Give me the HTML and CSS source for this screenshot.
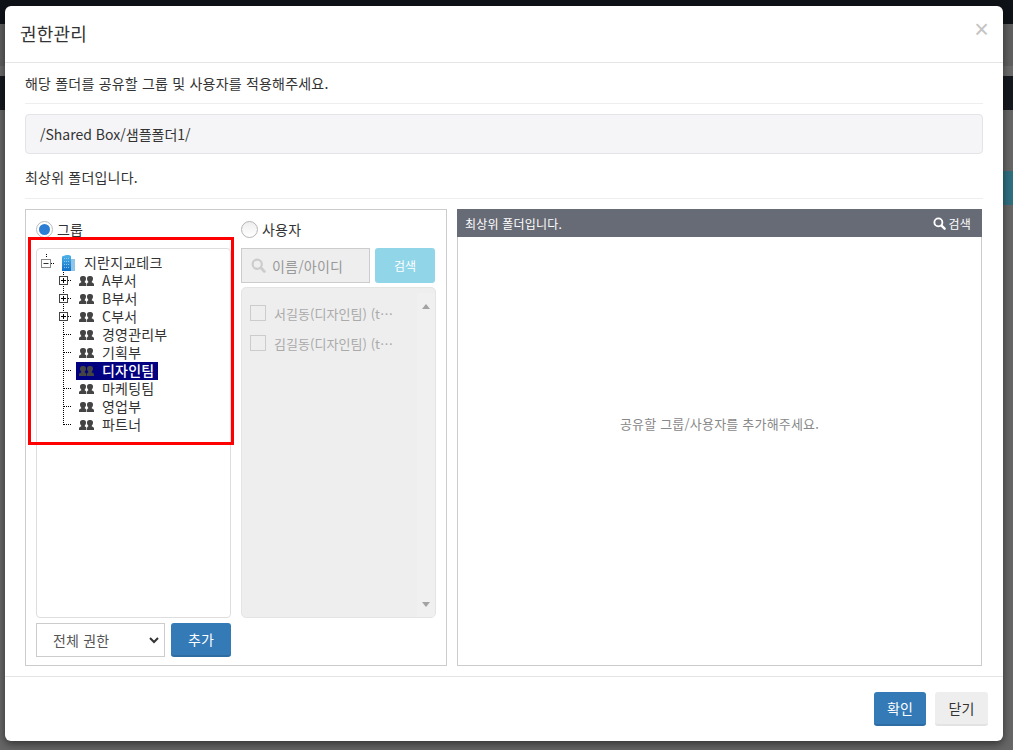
FILE: index.html
```html
<!DOCTYPE html>
<html lang="ko">
<head>
<meta charset="utf-8">
<title>권한관리</title>
<link rel="stylesheet" href="styles.css">
</head>
<body>
<svg class="defs" width="0" height="0" aria-hidden="true">
  <defs>
    <linearGradient id="bld" x1="0" y1="0" x2="0" y2="1">
      <stop offset="0" stop-color="#4fb4ea"/>
      <stop offset="1" stop-color="#0f6fc6"/>
    </linearGradient>
    <symbol id="i-group" viewBox="0 0 15 12">
      <path fill="currentColor" d="M3.500 1h1A2.500 2.500 0 0 1 7 3.500c0 1.300-.5 2.400-1.200 3v1.100C7 8 7.400 8.600 7.400 9.500V11H0V9.500c0-.9.900-1.500 2.200-1.900V6.500C1.500 5.900 1 4.800 1 3.500A2.500 2.500 0 0 1 3.500 1z"/>
      <path fill="currentColor" d="M10.500 1h1A2.500 2.500 0 0 1 14 3.500c0 1.300-.5 2.400-1.200 3v1.100c1.300.4 2.200 1 2.200 1.900V11H8V9.500c0-.9.200-1.500 1.200-1.900V6.500C8.500 5.900 8 4.800 8 3.500A2.500 2.500 0 0 1 10.500 1z"/>
    </symbol>
    <symbol id="i-plus" viewBox="0 0 18 18">
      <path fill="none" stroke="#000" stroke-dasharray="1 1" d="M9.500 0v18M14 8.500h4"/>
      <rect x="5.500" y="4.500" width="8" height="8" fill="#fff" stroke="#444"/>
      <path stroke="#000" d="M7 8.500h5M9.500 6v5"/>
    </symbol>
    <symbol id="i-tee" viewBox="0 0 18 18">
      <path fill="none" stroke="#000" stroke-dasharray="1 1" d="M9.500 0v18M10 8.500h8"/>
    </symbol>
    <symbol id="i-end" viewBox="0 0 18 18">
      <path fill="none" stroke="#000" stroke-dasharray="1 1" d="M9.500 0v9M10 8.500h8"/>
    </symbol>
    <symbol id="i-minus" viewBox="0 0 18 18">
      <path fill="none" stroke="#000" stroke-dasharray="1 1" d="M9.500 0v4M14 9.500h3"/>
      <rect x="4.500" y="5.500" width="9" height="8" fill="#fff" stroke="#888"/>
      <path stroke="#333" d="M6.500 9.500h5"/>
    </symbol>
    <symbol id="i-search" viewBox="0 0 14 14">
      <circle cx="5.800" cy="5.800" r="4.300" fill="none" stroke="currentColor" stroke-width="2"/>
      <path stroke="currentColor" stroke-width="2.600" stroke-linecap="round" d="M9.200 9.200l3.300 3.300"/>
    </symbol>
  </defs>
</svg>

<div class="page-bg">
  <div class="bg-band bg-top"></div>
  <div class="bg-band bg-gray"></div>
  <div class="bg-band bg-dark"></div>
  <div class="bg-band bg-rest"><span class="bg-teal"></span></div>
</div>

<main class="modal">
  <header class="modal-head">
    <h1 class="modal-title">권한관리</h1>
    <span class="modal-close">×</span>
  </header>
  <section class="modal-body">
    <p class="line first">해당 폴더를 공유할 그룹 및 사용자를 적용해주세요.</p>
    <div class="well">/Shared Box/샘플폴더1/</div>
    <p class="line second">최상위 폴더입니다.</p>
    <div class="panels">
      <div class="panel-left">
        <div class="col">
          <label class="radio-row"><span class="radio on"></span>그룹</label>
          <div class="tree">
            <div class="node root">
              <svg class="exp"><use href="#i-minus"/></svg>
              <svg class="building" viewBox="0 0 13 16">
                <path fill="url(#bld)" d="M0 1.500 4 0h3l2 1v15H0z"/>
                <path fill="#8fc6e8" d="M9 4h4v12H9z"/>
                <path fill="#a9dcf7" opacity=".75" d="M2 3h1v1H2zm2 0h1v1H4zm2 0h1v1H6zM2 6h1v1H2zm2 0h1v1H4zm2 0h1v1H6zM2 9h1v1H2zm2 0h1v1H4zm2 0h1v1H6zM2 12h1v1H2zm2 0h1v1H4zm2 0h1v1H6z"/>
              </svg>
              <span class="root-label">지란지교테크</span>
            </div>
            <div class="node"><svg class="exp"><use href="#i-plus"/></svg><span class="item"><svg class="grp"><use href="#i-group"/></svg><span class="lbl">A부서</span></span></div>
            <div class="node"><svg class="exp"><use href="#i-plus"/></svg><span class="item"><svg class="grp"><use href="#i-group"/></svg><span class="lbl">B부서</span></span></div>
            <div class="node"><svg class="exp"><use href="#i-plus"/></svg><span class="item"><svg class="grp"><use href="#i-group"/></svg><span class="lbl">C부서</span></span></div>
            <div class="node"><svg class="exp"><use href="#i-tee"/></svg><span class="item"><svg class="grp"><use href="#i-group"/></svg><span class="lbl">경영관리부</span></span></div>
            <div class="node"><svg class="exp"><use href="#i-tee"/></svg><span class="item"><svg class="grp"><use href="#i-group"/></svg><span class="lbl">기획부</span></span></div>
            <div class="node"><svg class="exp"><use href="#i-tee"/></svg><span class="item selected"><svg class="grp"><use href="#i-group"/></svg><span class="lbl">디자인팀</span></span></div>
            <div class="node"><svg class="exp"><use href="#i-tee"/></svg><span class="item"><svg class="grp"><use href="#i-group"/></svg><span class="lbl">마케팅팀</span></span></div>
            <div class="node"><svg class="exp"><use href="#i-tee"/></svg><span class="item"><svg class="grp"><use href="#i-group"/></svg><span class="lbl">영업부</span></span></div>
            <div class="node"><svg class="exp"><use href="#i-end"/></svg><span class="item"><svg class="grp"><use href="#i-group"/></svg><span class="lbl">파트너</span></span></div>
          </div>
          <div class="add-row">
            <div class="select"><span>전체 권한</span><svg class="chev" viewBox="0 0 10 7"><path fill="none" stroke="#333" stroke-width="2" d="M1 1l4 4 4-4"/></svg></div>
            <button class="btn primary add">추가</button>
          </div>
        </div>
        <div class="col">
          <label class="radio-row"><span class="radio"></span>사용자</label>
          <div class="search-row">
            <div class="search-input"><svg class="s-ico"><use href="#i-search"/></svg><span>이름/아이디</span></div>
            <button class="search-btn">검색</button>
          </div>
          <div class="user-list">
            <div class="users">
              <div class="user"><span class="check"></span><span class="uname">서길동(디자인팀) (t⋯</span></div>
              <div class="user"><span class="check"></span><span class="uname">김길동(디자인팀) (t⋯</span></div>
            </div>
            <div class="scroll">
              <span class="arrow up"></span>
              <span class="arrow down"></span>
            </div>
          </div>
        </div>
      </div>
      <div class="panel-right">
        <div class="right-head">
          <span>최상위 폴더입니다.</span>
          <span class="right-search"><svg class="r-ico"><use href="#i-search"/></svg>검색</span>
        </div>
        <div class="right-body">공유할 그룹/사용자를 추가해주세요.</div>
      </div>
    </div>
  </section>
  <footer class="modal-foot">
    <button class="btn primary ok">확인</button>
    <button class="btn close">닫기</button>
  </footer>
</main>
<div class="annotation"></div>
</body>
</html>
```

FILE: styles.css
```css
* { box-sizing: border-box; }
html, body { margin: 0; height: 750px; overflow: hidden; }
body {
  font-family: "Noto Sans CJK KR", "Noto Sans", sans-serif;
  font-size: 14px;
  letter-spacing: .2px;
  color: #333;
  background: #666;
  position: relative;
}
.defs { position: absolute; }

.page-bg { position: absolute; inset: 0; display: flex; flex-direction: column; }
.bg-top { height: 24px; background: #0f1217; }
.bg-gray { height: 52px; background: linear-gradient(#5f5f5f 0 42px, #6a6a6a 42px); }
.bg-dark { height: 34px; background: #15181e; }
.bg-rest { flex: 1; background: #666; position: relative; }
.bg-teal { position: absolute; right: 0; top: 61px; width: 10px; height: 34px; background: #2f6f80; }

.modal {
  position: absolute;
  left: 5px; top: 6px;
  width: 998px; height: 735px;
  background: #fff;
  border-radius: 6px;
  box-shadow: 0 3px 9px rgba(0,0,0,.5);
  display: flex;
  flex-direction: column;
}
.modal-head {
  height: 57px;
  flex: none;
  border-bottom: 1px solid #e5e5e5;
  display: flex;
  align-items: center;
  justify-content: space-between;
  padding: 0 14px 0 15px;
}
.modal-title { margin: 0; font-size: 18px; font-weight: 400; line-height: 1.1; color: #333; }
.modal-close { font-family: "Liberation Sans", sans-serif; font-size: 25px; font-weight: 400; color: #c4c4c4; margin-bottom: 9px; }

.modal-body { flex: 1; padding: 0 20px; display: flex; flex-direction: column; min-height: 0; }
.line { margin: 0; line-height: 20px; font-size: 14px; color: #333; border-bottom: 1px solid #eee; }
.first { padding: 10px 0 10px; height: 41px; }
.second { padding: 13px 0 11px; height: 45px; }
.well {
  margin-top: 10px;
  height: 40px;
  background: #f5f5f7;
  border: 1px solid #e3e3e8;
  border-radius: 4px;
  padding: 0 14px;
  line-height: 38px;
  letter-spacing: 0;
  color: #333;
}
.panels { margin-top: 10px; height: 457px; display: flex; gap: 10px; }
.panel-left {
  width: 422px;
  flex: none;
  border: 1px solid #ccc;
  padding: 0 10px;
  display: flex;
  gap: 10px;
}
.col { width: 195px; display: flex; flex-direction: column; }
.radio-row { height: 38px; padding-top: 9px; display: flex; align-items: flex-start; gap: 4px; line-height: 20px; color: #333; font-size: 14px; }
.radio {
  width: 17px; height: 17px;
  border-radius: 50%;
  border: 1px solid #b5b5b5;
  background: linear-gradient(#eee, #fff);
  margin-top: 2px;
  flex: none;
  position: relative;
}
.radio.on { background: #fff; border-color: #bbb; }
.radio.on::after {
  content: "";
  position: absolute;
  inset: 2px;
  border-radius: 50%;
  background: #2d7dd2;
}
.tree {
  height: 370px;
  border: 1px solid #ddd;
  border-radius: 4px;
  padding-top: 5px;
  flex: none;
}
.node { height: 18px; display: flex; align-items: center; padding-left: 17px; }
.node .exp { width: 18px; height: 18px; flex: none; margin-right: 4px; }
.node.root { padding-left: 0; }
.node.root .exp { margin-right: 7px; }
.building { width: 13px; height: 16px; flex: none; margin-right: 9px; }
.root-label, .lbl { font-size: 14px; line-height: 18px; color: #333; white-space: nowrap; margin-bottom: 2px; }
.item { display: inline-flex; align-items: center; height: 18px; padding: 0 4px 0 3px; }
.grp { width: 15px; height: 12px; color: #444; margin-right: 8px; flex: none; }
.selected { background: #000080; }
.selected .lbl { color: #fff; font-weight: 500; }
.add-row { margin-top: 5px; display: flex; gap: 6px; }
.select {
  width: 129px; height: 34px;
  border: 1px solid #ccc;
  background: #fff;
  color: #555;
  padding: 0 5px 0 16px;
  display: flex;
  align-items: center;
  justify-content: space-between;
}
.chev { width: 10px; height: 7px; }
.btn {
  font: inherit;
  letter-spacing: inherit;
  border-radius: 3px;
  border: 0;
  padding: 0;
  cursor: pointer;
}
.primary { background: #337ab7; color: #fff; border-bottom: 2px solid #2e6da4; }
.add { width: 60px; height: 34px; }

.search-row { display: flex; gap: 5px; height: 35px; flex: none; }
.search-input {
  width: 129px;
  background: #eee;
  border: 1px solid #ccc;
  color: #999;
  display: flex;
  align-items: center;
  gap: 6px;
  padding-left: 9px;
}
.s-ico { width: 15px; height: 15px; color: #ccc; flex: none; }
.search-btn {
  width: 60px;
  font: inherit;
  font-size: 12px;
  border: 0;
  border-radius: 3px;
  background: #91d5e9;
  color: #fff;
}
.user-list {
  margin-top: 4px;
  height: 331px;
  background: #eee;
  border: 1px solid #e4e4e4;
  border-radius: 5px;
  display: flex;
  overflow: hidden;
}
.users { flex: 1; padding: 10px 0 0 8px; }
.user { height: 30px; display: flex; align-items: center; gap: 8px; color: #aaa; font-size: 13px; letter-spacing: .05px; white-space: nowrap; }
.check { width: 16px; height: 16px; border: 1px solid #ccc; flex: none; }
.scroll { width: 18px; background: #f0f0f0; display: flex; flex-direction: column; justify-content: space-between; align-items: center; padding: 11px 0 10px; margin: 5px 0 0; }
.arrow { width: 0; height: 0; border-left: 4px solid transparent; border-right: 4px solid transparent; }
.up { border-bottom: 5px solid #a3a3a3; }
.down { border-top: 5px solid #a3a3a3; }

.panel-right { flex: 1; margin-right: 1px; display: flex; flex-direction: column; }
.right-head {
  height: 28px;
  background: #676b76;
  color: #fff;
  font-size: 12px;
  display: flex;
  align-items: center;
  justify-content: space-between;
  padding: 0 11px 0 8px;
  flex: none;
}
.right-search { display: flex; align-items: center; gap: 3px; }
.r-ico { width: 13px; height: 13px; color: #fff; }
.right-body {
  flex: 1;
  border: 1px solid #ccc;
  border-top: 0;
  display: flex;
  align-items: center;
  justify-content: center;
  font-size: 13px;
  color: #888;
  padding-bottom: 55px;
}

.modal-foot {
  flex: none;
  height: 65px;
  border-top: 1px solid #e5e5e5;
  display: flex;
  justify-content: flex-end;
  align-items: flex-start;
  gap: 9px;
  padding: 15px 15px 0 0;
}
.ok { width: 52px; height: 34px; }
.close { width: 53px; height: 34px; background: #eee; color: #333; border-bottom: 2px solid #e3e3e3; }

.annotation {
  position: absolute;
  left: 28px; top: 237px;
  width: 206px; height: 208px;
  border: 3px solid #f00;
  pointer-events: none;
}
```
